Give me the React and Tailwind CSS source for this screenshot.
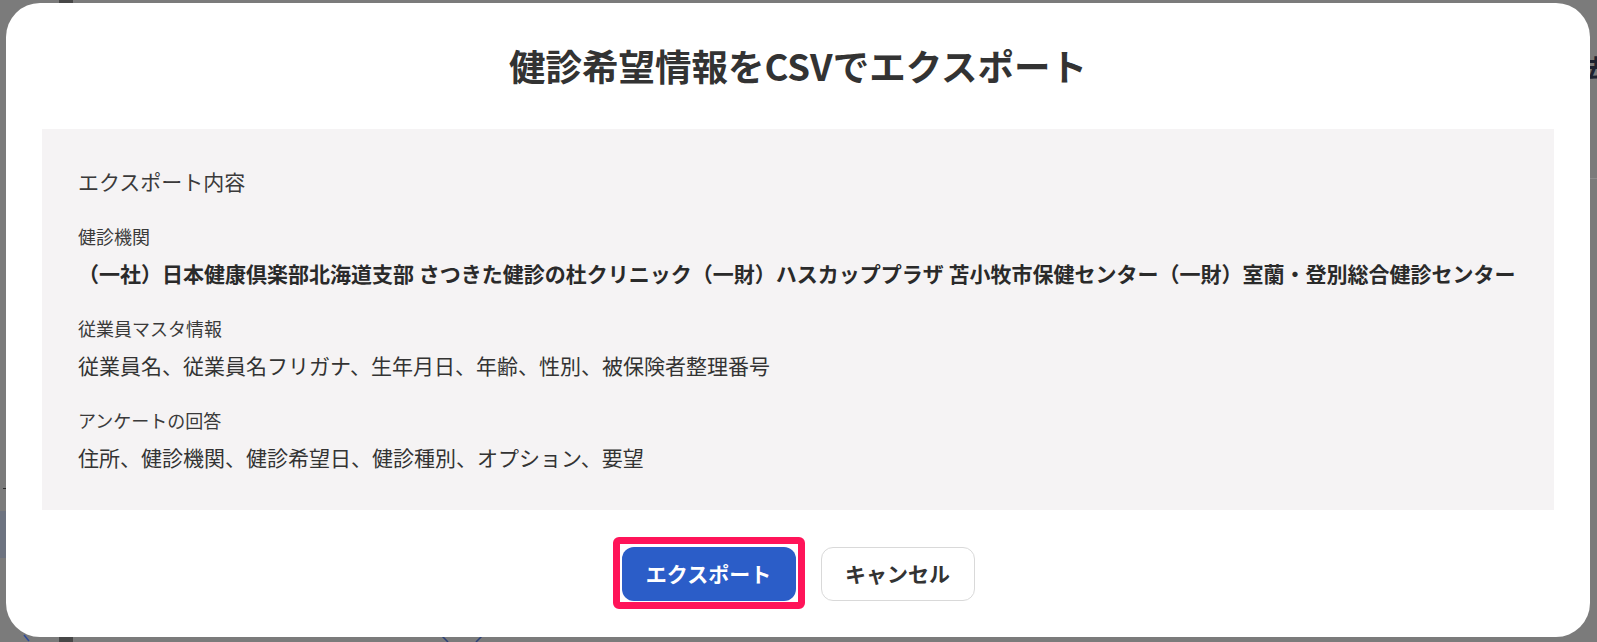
import React from "react";

const font = "font-['Noto_Sans_CJK_JP','Noto_Sans',sans-serif]";

function Group({ label, children, bold }) {
  return (
    <div className="flex flex-col gap-[9px]">
      <div className="text-[18px] leading-[26px] text-[#3a3a3a]">{label}</div>
      <div
        className={
          "text-[21px] leading-[30px] whitespace-nowrap " +
          (bold ? "font-bold text-[#2a2a2a]" : "text-[#333333]")
        }
      >
        {children}
      </div>
    </div>
  );
}

export default function App() {
  return (
    <div className={"relative w-[1597px] h-[642px] overflow-hidden bg-[#7b7b7b] " + font}>
      {/* underlying page slivers (dimmed by overlay) */}
      <div className="absolute inset-0">
        <div className="absolute left-[59px] top-0 w-[14px] h-full bg-[#474747]" />
        <div className="absolute left-0 top-[511px] w-[8px] h-[47px] bg-[#6d7380]" />
        <div className="absolute left-[3px] top-[488px] w-[3px] h-[1px] bg-[#2a2a2a]" />
        <div className="absolute left-[1588px] top-[178px] w-[9px] h-[1px] bg-[#8c8c8c]" />
        <div className="absolute left-[1584px] top-[52px] text-[24px] leading-[30px] font-bold text-[#1e2230]">
          去
        </div>
        <svg className="absolute left-[20px] top-[634px]" width="12" height="8" viewBox="0 0 12 8">
          <path d="M4 1 L9 7" stroke="#2d4a9a" strokeWidth="1.5" fill="none" />
        </svg>
        <svg className="absolute left-[436px] top-[630px]" width="52" height="12" viewBox="0 0 52 12">
          <path d="M2 2 L12 12 M50 2 L40 12" stroke="#2d4178" strokeWidth="1.5" fill="none" />
        </svg>
      </div>

      {/* modal */}
      <div className="absolute left-[6px] top-[3px] w-[1584px] h-[634px] bg-white rounded-[34px] flex flex-col items-center pt-[39px] pb-[36px] px-[36px]">
        <h2 className="text-[36.5px] leading-[47px] font-bold text-[#333333] whitespace-nowrap">
          健診希望情報をCSVでエクスポート
        </h2>

        <div className="mt-[40px] w-full bg-[#f5f3f4] pt-[37px] pb-[38px] px-[36px] flex flex-col gap-[27px]">
          <div className="text-[21px] leading-[30px] text-[#3a3a3a]">エクスポート内容</div>
          <Group label="健診機関" bold>
            （一社）日本健康倶楽部北海道支部 さつきた健診の杜クリニック（一財）ハスカッププラザ 苫小牧市保健センター（一財）室蘭・登別総合健診センター
          </Group>
          <Group label="従業員マスタ情報">
            従業員名、従業員名フリガナ、生年月日、年齢、性別、被保険者整理番号
          </Group>
          <Group label="アンケートの回答">
            住所、健診機関、健診希望日、健診種別、オプション、要望
          </Group>
        </div>

        <div className="mt-[37px] flex items-center gap-[25px]">
          <div className="relative">
            <button className="h-[54px] w-[174px] rounded-[12px] bg-[#2b5dc8] text-white text-[21px] font-bold flex items-center justify-center">
              エクスポート
            </button>
            <div className="absolute -left-[9px] -right-[9px] -top-[10px] -bottom-[8px] border-[7px] border-[#ff1459] rounded-[6px] pointer-events-none" />
          </div>
          <button className="h-[54px] w-[154px] rounded-[12px] bg-white border border-[#d9d9d9] text-[#333333] text-[21px] font-bold flex items-center justify-center">
            キャンセル
          </button>
        </div>
      </div>
    </div>
  );
}
